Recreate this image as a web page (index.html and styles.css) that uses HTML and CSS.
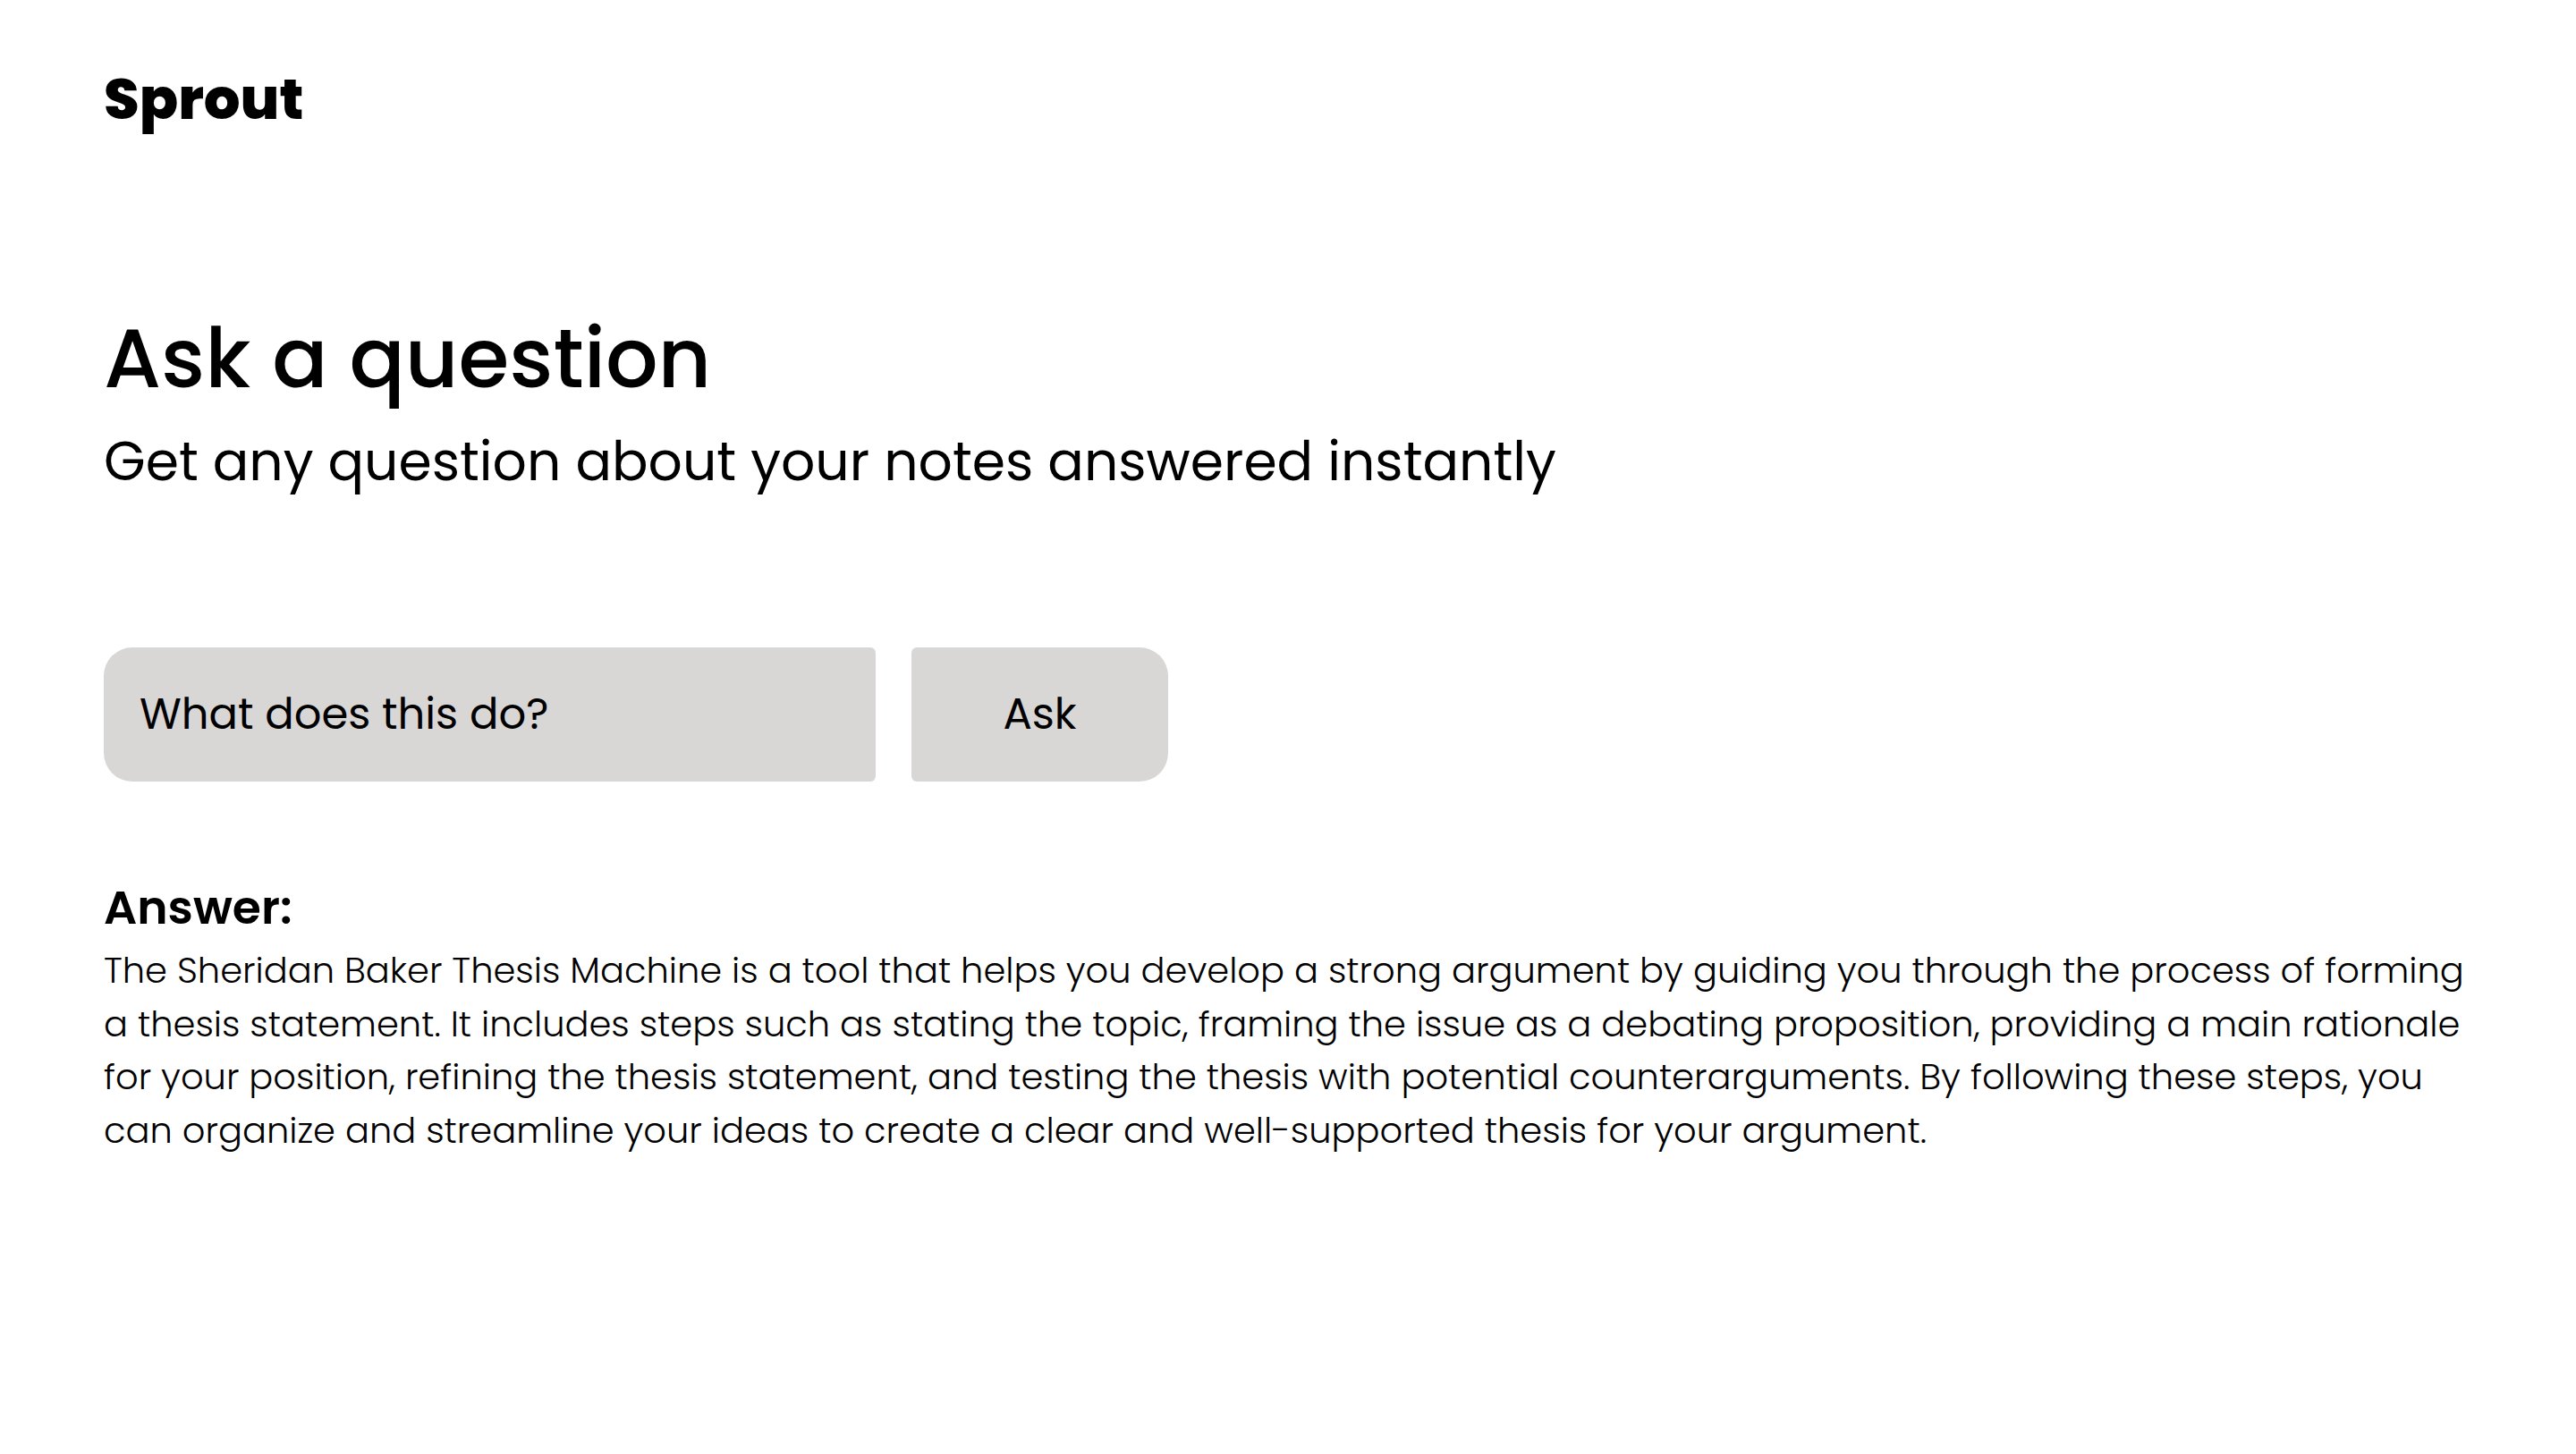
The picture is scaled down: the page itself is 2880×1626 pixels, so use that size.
FILE: index.html
```html
<!DOCTYPE html>
<html lang="en">
<head>
<meta charset="utf-8">
<title>Sprout</title>
<link rel="stylesheet" href="styles.css">
</head>
<body>
<div class="page">
  <header class="topbar">
    <div class="logo">Sprout</div>
  </header>
  <main class="main">
    <h1 class="title">Ask a question</h1>
    <p class="subtitle">Get any question about your notes answered instantly</p>
    <form class="ask-form">
      <input class="ask-input" type="text" value="What does this do?">
      <button class="ask-button" type="button">Ask</button>
    </form>
    <section class="answer">
      <h2 class="answer-label">Answer:</h2>
      <p class="answer-text">The Sheridan Baker Thesis Machine is a tool that helps you develop a strong argument by guiding you through the process of forming a thesis statement. It includes steps such as stating the topic, framing the issue as a debating proposition, providing a main rationale for your position, refining the thesis statement, and testing the thesis with potential counterarguments. By following these steps, you can organize and streamline your ideas to create a clear and well-supported thesis for your argument.</p>
    </section>
  </main>
</div>
</body>
</html>
```
FILE: styles.css
```css
html, body {
  margin: 0;
  padding: 0;
  background: #ffffff;
}
body {
  font-family: "Poppins", "Open Sans", "Liberation Sans", sans-serif;
  color: #000000;
}
.page {
  padding: 71px 116px 0 116px;
}
.topbar {
  display: flex;
  align-items: center;
}
.logo {
  font-size: 64px;
  line-height: 80px;
  font-weight: 800;
}
.main {
  display: flex;
  flex-direction: column;
}
.title {
  margin: 195px 0 0 0;
  font-size: 92px;
  line-height: 110px;
  font-weight: 500;
}
.subtitle {
  margin: 25px 0 0 0;
  font-size: 60px;
  line-height: 70px;
  font-weight: 400;
}
.ask-form {
  margin: 173px 0 0 0;
  display: flex;
  gap: 40px;
  height: 150px;
}
.ask-input {
  width: 863px;
  box-sizing: border-box;
  height: 150px;
  border: none;
  outline: none;
  background: #d9d6d6;
  border-radius: 32px 6px 6px 32px;
  padding: 0 40px;
  font-family: inherit;
  font-size: 48px;
  font-weight: 400;
  color: #000;
}
.ask-button {
  width: 287px;
  height: 150px;
  border: none;
  background: #d9d6d6;
  border-radius: 6px 32px 32px 6px;
  font-family: inherit;
  font-size: 48px;
  font-weight: 400;
  color: #000;
  padding: 0;
}
.answer {
  margin-top: 109px;
}
.answer-label {
  margin: 0;
  font-size: 52px;
  line-height: 64px;
  font-weight: 600;
}
.answer-text {
  margin: 9px 0 0 0;
  font-size: 40px;
  line-height: 59.5px;
  font-weight: 300;
}
```
